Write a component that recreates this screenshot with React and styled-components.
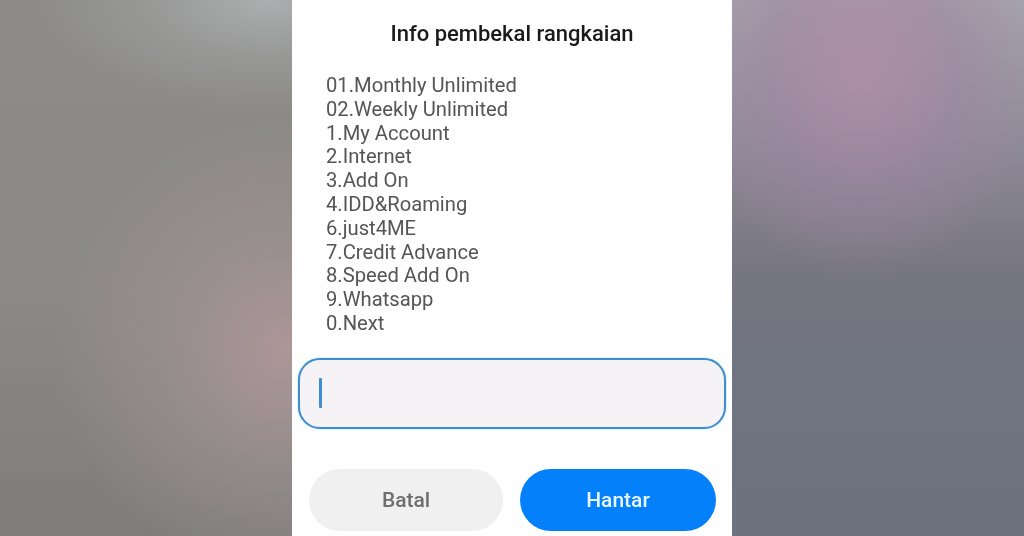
import React from "react";
import styled, { createGlobalStyle } from "styled-components";

const Global = createGlobalStyle`
  html, body { margin: 0; padding: 0; width: 1024px; height: 536px; overflow: hidden; background: #808080; }
  #root { width: 1024px; height: 536px; }
`;

const Page = styled.div`
  display: flex;
  width: 1024px;
  height: 536px;
  overflow: hidden;
  font-family: Roboto, "Liberation Sans", sans-serif;
`;

const LeftBackdrop = styled.div`
  width: 292px;
  flex: none;
  background:
    radial-gradient(ellipse 230px 230px at 285px 350px, rgba(172,150,152,1), rgba(160,146,148,.6) 50%, rgba(140,135,135,0) 100%),
    radial-gradient(ellipse 240px 110px at 270px 0px, rgba(172,175,175,1), rgba(158,160,160,.65) 50%, rgba(140,140,135,0) 100%),
    linear-gradient(180deg, #8c8b87 0%, #8b8985 55%, #7e7d7c 100%);
`;

const RightBackdrop = styled.div`
  width: 292px;
  flex: none;
  background:
    radial-gradient(ellipse 170px 210px at 130px 70px, rgba(176,142,168,.85), rgba(160,134,160,.55) 55%, rgba(130,120,145,0) 100%),
    linear-gradient(180deg, #a6a2ae 0%, #8e8998 28%, #777682 50%, #6f7480 68%, #6c727e 100%);
`;

const Dialog = styled.main`
  width: 440px;
  flex: none;
  box-sizing: border-box;
  height: 536px;
  background: #fefefe;
  display: flex;
  flex-direction: column;
  padding: 20px 6px 0;
  filter: blur(0.35px);
`;

const Title = styled.h1`
  margin: 0;
  text-align: center;
  font-size: 22px;
  line-height: 28px;
  font-weight: 500;
  color: #1a1a1a;
`;

const MenuList = styled.div`
  margin: 26px 0 0 28px;
  display: flex;
  flex-direction: column;
`;

const MenuItem = styled.div`
  font-size: 20.2px;
  line-height: 23.8px;
  color: #555;
  white-space: nowrap;
`;

const Field = styled.div`
  box-sizing: border-box;
  margin-top: 22px;
  height: 71px;
  width: 428px;
  border: 2px solid #3d8dd0;
  border-radius: 22px;
  background: #f5f3f5;
  display: flex;
  align-items: center;
  padding-left: 19px;
  box-shadow: 0 0 2px rgba(90, 190, 250, .6);
`;

const Caret = styled.span`
  display: block;
  width: 3px;
  height: 30px;
  border-radius: 1px;
  background: #3d8dd0;
`;

const Actions = styled.div`
  display: flex;
  gap: 17px;
  margin: 40px 0 0 11px;
`;

const ActionButton = styled.button`
  border: 0;
  padding: 0;
  width: ${(p) => (p.$primary ? "196px" : "194px")};
  height: 62px;
  border-radius: 31px;
  background: ${(p) => (p.$primary ? "#0580fb" : "#f0f0f1")};
  color: ${(p) => (p.$primary ? "#e8f6ff" : "#6e6e6e")};
  font-family: inherit;
  font-size: 21px;
  font-weight: 500;
`;

const items = [
  "01.Monthly Unlimited",
  "02.Weekly Unlimited",
  "1.My Account",
  "2.Internet",
  "3.Add On",
  "4.IDD&Roaming",
  "6.just4ME",
  "7.Credit Advance",
  "8.Speed Add On",
  "9.Whatsapp",
  "0.Next",
];

export default function App() {
  return (
    <Page>
      <Global />
      <LeftBackdrop />
      <Dialog>
        <Title>Info pembekal rangkaian</Title>
        <MenuList>
          {items.map((t) => (
            <MenuItem key={t}>{t}</MenuItem>
          ))}
        </MenuList>
        <Field>
          <Caret />
        </Field>
        <Actions>
          <ActionButton>Batal</ActionButton>
          <ActionButton $primary>Hantar</ActionButton>
        </Actions>
      </Dialog>
      <RightBackdrop />
    </Page>
  );
}
